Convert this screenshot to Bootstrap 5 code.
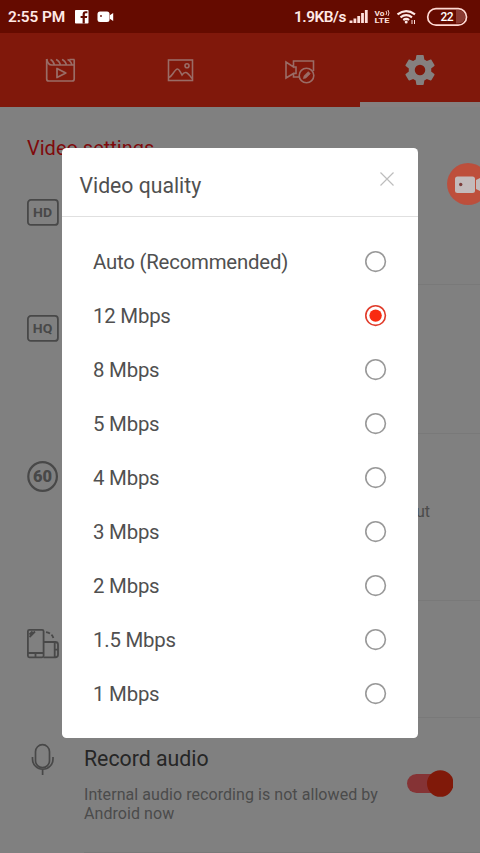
<!DOCTYPE html>
<html lang="en">
<head>
<meta charset="utf-8">
<meta name="viewport" content="width=device-width, initial-scale=1">
<title>Video quality</title>
<link href="https://cdn.jsdelivr.net/npm/bootstrap@5.3.0/dist/css/bootstrap.min.css" rel="stylesheet">
<style>
body{font-family:Roboto,"Noto Sans",sans-serif;background:#808080;height:853px;overflow:hidden;color:#4b4b4b}
svg{display:block;flex:none}
.status{height:33px;background:#650b00;color:#ffe9e6;font-weight:600;font-size:15.4px;line-height:33px;padding:1px 12px 0 8px}
.clock{letter-spacing:-.1px;width:62px}
.net-speed{letter-spacing:-.45px;margin-right:1px}
.tabs{height:74px;background:#80180b;color:#9a6c66}
.tab-item{width:120px;padding-top:21px}
.tab-item.active{padding-top:19px;border-bottom:5px solid #858080;color:#85807f}
.section-title{height:61px;padding:29px 0 0 27px;font-size:20px;line-height:24px;color:#7f0a0c}
.setting{padding-left:27px}
.setting-icon{width:57px;color:#484848}
.setting-body{border-bottom:1px solid #797979}
.h-first{height:117px}.h-second{height:149px}.h-third{height:167px}.h-fourth{height:117px}.h-audio{height:135px}
.t-1{padding-top:30.5px}.t-2{padding-top:29.5px}.t-3{padding-top:27px}.t-4{padding-top:27px}.t-5{padding-top:24px}
.clip-note{padding:68px 50px 0 0;font-size:16px;line-height:20px}
.audio-title{font-size:21.3px;line-height:26px;color:#262626;padding-top:28px}
.audio-note{font-size:16px;line-height:18.5px;margin-top:14px;width:310px;letter-spacing:.06px}
.switch-track{width:46px;height:27px;margin:52px 27px 0 0}
.float-btn{top:161px;left:445px}
.dialog-box{left:62px;top:148px;width:355.5px;height:590px;border-radius:4.5px;z-index:2;color:#505050}
.dialog-head{height:69px;padding:8px 23px 0 17.5px;border-bottom:1px solid #e0e0e0;font-size:21.2px}
.close-x{margin-bottom:15px}
.choices{padding:18px 31px 0 31px}
.choice{height:54px;font-size:20.4px;letter-spacing:-.22px}
</style>
<script src="https://cdn.jsdelivr.net/npm/bootstrap@5.3.0/dist/js/bootstrap.bundle.min.js"></script>
</head>
<body>
<svg class="d-none"><defs>
<symbol id="radio-off" viewBox="0 0 22 22"><circle cx="10.600" cy="10.600" r="9.800" fill="#fff" stroke="#999" stroke-width="1.600"/></symbol>
<symbol id="radio-on" viewBox="0 0 22 22"><circle cx="10.600" cy="10.600" r="9.800" fill="#fff" stroke="#e03c2b" stroke-width="1.600"/><circle cx="10.600" cy="10.600" r="6.200" fill="#f92b10"/></symbol>
</defs></svg>
<header>
<div class="status d-flex align-items-center">
  <span class="clock text-nowrap">2:55 PM</span>
  <svg width="50" height="16" viewBox="70 9 50 16"><rect x="75" y="10" width="13.500" height="13.500" rx=".8" fill="#fff"/><path d="M82.600 23.500v-5.600h-2v-2h2v-1.600c0-2 1-3 3-3h1.800v2h-1.200c-1 0-1.400.4-1.400 1.300v1.300h2.500l-.4 2h-2.100v5.600z" fill="#650b00"/><rect x="97.500" y="11.500" width="12" height="10.500" rx="2.500" fill="#fff"/><path d="M109.800 15.300l3.400-2.200v7.800l-3.400-2.200z" fill="#fff"/><circle cx="101" cy="16" r=".9" fill="#650b00"/></svg>
  <div class="ms-auto d-flex align-items-center">
    <span class="net-speed">1.9KB/s</span>
    <svg width="121" height="22" viewBox="348 6 121 22"><g fill="#ffe0dc"><path d="M350.500 20.500h3V23h-3zM354.500 18.500h2.800V23h-2.800zM358.300 16h2.800v7h-2.800zM362.100 13h2.800v10h-2.800zM365.900 10h2.800v13h-2.800z"/></g><g fill="#ffe0dc" font-family="Roboto" font-weight="700" font-size="8"><text x="375.500" y="15.800" textLength="10" lengthAdjust="spacingAndGlyphs">Vo</text><text x="375.500" y="23.300" textLength="15" lengthAdjust="spacingAndGlyphs">LTE</text></g><path d="M387 11q1.500 2 0 4M389 10q2 3 0 6" fill="none" stroke="#ffe0dc" stroke-width=".9"/><g fill="none" stroke="#ffe9e6" stroke-width="2.200"><path d="M398.500 14.300q8.500-6.500 17.500 0M401.500 17.300q5.700-4.300 11.500 0M404.300 20q3-2.200 5.800 0"/></g><circle cx="407.200" cy="22" r="1.500" fill="#ffe9e6"/><path d="M413 20v4M415.500 20v4" stroke="#ffe0dc"/><path d="M457 10h2.500a6.700 6.700 0 0 1 0 13.500H457z" fill="#8a3b33"/><rect x="428.700" y="8.600" width="38.800" height="16.600" rx="8.300" fill="none" stroke="#ffd9d3" stroke-width="1.700"/><text x="441.500" y="20.800" font-family="Roboto" font-weight="500" font-size="12" textLength="13" fill="#fff">22</text></svg>
  </div>
</div>
<nav class="tabs d-flex">
  <div class="tab-item d-flex justify-content-center"><svg width="32" height="32" viewBox="44 54 32 32" fill="none" stroke="currentColor" stroke-width="1.700"><path d="M46.700 59v20q0 2 2 2h23.500q2 0 2-2V59.500"/><path d="M46.700 59q1 6 5 6h22.500M50.500 59.500q2.500 1 4 5.500M56 59.500q3 1 4.500 5.500M62 59.500q3 1 4.500 5.500M67.500 59.500q3 1 4.500 5.500M69.500 59.500h5"/><path d="M57 68.500v9l8.800-4.500z" stroke-linejoin="round" stroke-width="1.800"/></svg></div>
  <div class="tab-item d-flex justify-content-center"><svg width="32" height="32" viewBox="164 54 32 32" fill="none" stroke="currentColor" stroke-width="1.600"><rect x="168.500" y="60" width="24" height="20.500"/><circle cx="187" cy="65.700" r="2"/><path d="M169 77.500q2-1 4-4 3-4.500 4.500-4.500t4.500 6q2-3 4-2.500t6 6"/></svg></div>
  <div class="tab-item d-flex justify-content-center"><svg width="32" height="32" viewBox="284 54 32 32" fill="none" stroke="currentColor" stroke-width="1.600"><path d="M299 77h-5.500v-3.500l-7.500 4.500V62l7.500 5v-6h20v10M293.500 67h2.500v6.500h-2.500"/><circle cx="306.500" cy="75.500" r="7.300"/><path d="M303.200 78.800l.8-3 4.300-4.200 2.100 2.100-4.300 4.300z" fill="currentColor" stroke-width=".5"/></svg></div>
  <div class="tab-item active d-flex justify-content-center"><svg width="36" height="36" viewBox="0 0 24 24"><path fill="currentColor" d="M19.430 12.980c.04-.32.070-.64.070-.98s-.03-.66-.07-.98l2.110-1.650c.19-.15.240-.42.120-.64l-2-3.460c-.12-.22-.39-.3-.61-.22l-2.490 1c-.52-.4-1.080-.73-1.690-.98l-.38-2.650C14.460 2.180 14.250 2 14 2h-4c-.25 0-.46.180-.49.420l-.38 2.650c-.61.250-1.170.590-1.690.980l-2.490-1c-.23-.09-.49 0-.61.220l-2 3.460c-.13.220-.07.490.120.640l2.110 1.650c-.04.320-.07.650-.07.980s.030.660.070.980l-2.110 1.650c-.19.150-.24.420-.12.640l2 3.460c.12.220.390.300.610.220l2.490-1c.52.400 1.080.730 1.690.980l.38 2.650c.03.240.240.420.490.420h4c.25 0 .46-.18.490-.42l.38-2.650c.61-.25 1.170-.59 1.690-.98l2.490 1c.23.090.490 0 .61-.22l2-3.460c.12-.22.070-.49-.12-.64z"/><circle cx="12" cy="12" r="3.500" fill="#80180b"/></svg></div>
</nav>
</header>
<main>
  <div class="section-title">Video settings</div>
  <section class="setting h-first d-flex"><div class="setting-icon t-1"><svg width="32" height="27" viewBox="0 0 32 27"><rect x=".9" y=".9" width="30" height="25" rx="3" fill="none" stroke="currentColor" stroke-width="1.800"/><text x="6" y="17.900" font-family="Roboto" font-weight="700" font-size="13" textLength="19" lengthAdjust="spacingAndGlyphs" fill="currentColor">HD</text></svg></div><div class="setting-body flex-grow-1"></div></section>
  <section class="setting h-second d-flex"><div class="setting-icon t-2"><svg width="32" height="27" viewBox="0 0 32 27"><rect x=".9" y=".9" width="30" height="25" rx="3" fill="none" stroke="currentColor" stroke-width="1.800"/><text x="5.800" y="17.900" font-family="Roboto" font-weight="700" font-size="13" textLength="19.500" lengthAdjust="spacingAndGlyphs" fill="currentColor">HQ</text></svg></div><div class="setting-body flex-grow-1"></div></section>
  <section class="setting h-third d-flex"><div class="setting-icon t-3"><svg width="32" height="32" viewBox="0 0 32 32"><circle cx="15.600" cy="15.500" r="14.300" fill="none" stroke="currentColor" stroke-width="2.200"/><text x="6" y="21" font-family="Roboto" font-weight="900" font-size="16" textLength="19" lengthAdjust="spacingAndGlyphs" fill="currentColor">60</text></svg></div><div class="setting-body clip-note flex-grow-1 text-end">ut</div></section>
  <section class="setting h-fourth d-flex"><div class="setting-icon t-4"><svg width="33" height="32" viewBox="27 628 33 32" fill="none" stroke="currentColor" stroke-width="1.800"><rect x="27.900" y="629.800" width="15.700" height="27.500" rx="1.500"/><path d="M28 653h15.500M35.500 653v4M43.500 642h11.700q2.800 0 2.800 2.500v10.300q0 2.500-2.800 2.500H43.500M54.700 642v15.300M54.700 649.700h3.300M29.500 634.500l3-3M29.500 637l5.500-5.500"/><path d="M46 632.200q7 .8 7.800 8" stroke-dasharray="4 2"/></svg></div><div class="setting-body flex-grow-1"></div></section>
  <section class="setting h-audio d-flex"><div class="setting-icon t-5"><svg width="32" height="34" viewBox="27 742 32 34" fill="none" stroke="currentColor" stroke-width="1.700"><rect x="35.500" y="744.700" width="14" height="23" rx="7"/><path d="M32.500 757v2a10 10 0 0 0 20.500 0v-2M42.600 769.500v5.500"/></svg></div>
    <div class="setting-body flex-grow-1 d-flex justify-content-between"><div><div class="audio-title">Record audio</div><div class="audio-note">Internal audio recording is not allowed by<br>Android now</div></div>
    <svg class="switch-track" viewBox="0 0 46 27"><rect y="4" width="38" height="19" rx="9.500" fill="#853335"/><circle cx="33.300" cy="13.500" r="13.300" fill="#801909"/></svg></div></section>
</main>
<div class="float-btn position-absolute"><svg width="35" height="46" viewBox="445 161 35 46"><circle cx="468" cy="184" r="21" fill="#b9503f"/><circle cx="468" cy="184" r="19.500" fill="#be4f3b"/><rect x="455" y="176.500" width="20" height="16.500" rx="2.500" fill="#c3bbbb"/><path d="M476 180l5-2.500v14l-5-2.500z" fill="#c3bbbb"/><circle cx="460.700" cy="184.500" r="1.700" fill="#7c3d3a"/></svg></div>
<div class="dialog-box bg-white position-absolute" role="dialog">
  <div class="dialog-head d-flex align-items-center justify-content-between"><span>Video quality</span><svg class="close-x" width="16" height="16" viewBox="0 0 16 16"><path d="M1.500 1.500l13 13M14.500 1.500l-13 13" stroke="#bdbdbd" stroke-width="1.200"/></svg></div>
  <div class="choices">
    <div class="choice d-flex align-items-center justify-content-between"><span>Auto (Recommended)</span><svg width="22" height="22"><use href="#radio-off"/></svg></div>
    <div class="choice d-flex align-items-center justify-content-between"><span>12 Mbps</span><svg width="22" height="22"><use href="#radio-on"/></svg></div>
    <div class="choice d-flex align-items-center justify-content-between"><span>8 Mbps</span><svg width="22" height="22"><use href="#radio-off"/></svg></div>
    <div class="choice d-flex align-items-center justify-content-between"><span>5 Mbps</span><svg width="22" height="22"><use href="#radio-off"/></svg></div>
    <div class="choice d-flex align-items-center justify-content-between"><span>4 Mbps</span><svg width="22" height="22"><use href="#radio-off"/></svg></div>
    <div class="choice d-flex align-items-center justify-content-between"><span>3 Mbps</span><svg width="22" height="22"><use href="#radio-off"/></svg></div>
    <div class="choice d-flex align-items-center justify-content-between"><span>2 Mbps</span><svg width="22" height="22"><use href="#radio-off"/></svg></div>
    <div class="choice d-flex align-items-center justify-content-between"><span>1.5 Mbps</span><svg width="22" height="22"><use href="#radio-off"/></svg></div>
    <div class="choice d-flex align-items-center justify-content-between"><span>1 Mbps</span><svg width="22" height="22"><use href="#radio-off"/></svg></div>
  </div>
</div>
</body>
</html>
